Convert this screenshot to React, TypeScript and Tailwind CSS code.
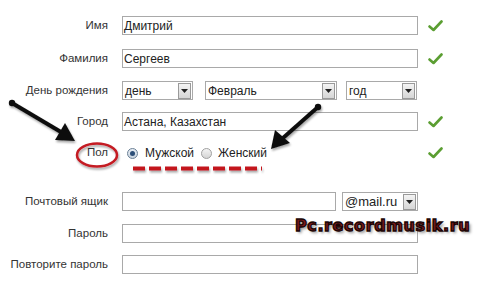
const Check = () => (
  <svg width="15" height="12" viewBox="0 0 15 12" className="ml-[10px] shrink-0">
    <path d="M1.5 6.5 L5.5 10 L13.5 1.5" fill="none" stroke="#5b9e32" strokeWidth="2.6" strokeLinecap="round" strokeLinejoin="round" />
  </svg>
);

const Arrow = () => (
  <div className="flex h-[16px] w-[13px] shrink-0 items-center justify-center border border-[#9a9a9a] bg-gradient-to-b from-[#f4f4f4] to-[#d6d6d6]">
    <svg width="7" height="4" viewBox="0 0 7 4">
      <path d="M0 0 H7 L3.5 4 Z" fill="#222" />
    </svg>
  </div>
);

function Select({ value, w, big }: { value: string; w: string; big?: boolean }) {
  return (
    <div className={`flex h-[19px] items-center justify-between border border-[#a9a9a9] bg-white pl-[2px] pr-[1px] ${w}`}>
      <span className={big ? "text-[13px] text-[#222]" : "text-[12px] text-[#222]"}>{value}</span>
      <Arrow />
    </div>
  );
}

function Input({ value = "", w = "w-[296px]" }: { value?: string; w?: string }) {
  return (
    <div className={`flex h-[19px] items-center border border-[#a9a9a9] bg-white pl-[1px] text-[12px] text-[#222] ${w}`}>
      {value}
    </div>
  );
}

function Row({ label, children, check, className = "" }: { label: string; children: React.ReactNode; check?: boolean; className?: string }) {
  return (
    <div className={`flex items-center ${className}`}>
      <div className="w-[108px] shrink-0 text-right text-[11.5px] text-[#333]">{label}</div>
      <div className="ml-[14px] flex w-[296px] items-center">{children}</div>
      {check && <Check />}
    </div>
  );
}

export default function App() {
  return (
    <div className="relative h-[285px] w-[480px] overflow-hidden bg-white font-['Liberation_Sans',Arial,sans-serif]">
      <div className="flex flex-col pt-[16px]">
        <Row label="Имя" check>
          <Input value="Дмитрий" />
        </Row>
        <Row label="Фамилия" check className="mt-[14px]">
          <Input value="Сергеев" />
        </Row>
        <Row label="День рождения" className="mt-[13px]">
          <Select value="день" w="w-[71px]" />
          <div className="ml-[12px]">
            <Select value="Февраль" w="w-[132px]" />
          </div>
          <div className="ml-[9px]">
            <Select value="год" w="w-[71px]" />
          </div>
        </Row>
        <Row label="Город" check className="mt-[12px]">
          <Input value="Астана, Казахстан" />
        </Row>
        <Row label="Пол" check className="mt-[13px] h-[18px]">
          <div className="ml-[5px] flex h-[11px] w-[11px] items-center justify-center rounded-full border border-[#6a7f95] bg-gradient-to-b from-[#e8eef5] to-[#c8d3de]">
            <div className="h-[5px] w-[5px] rounded-full bg-[#2d4f78]" />
          </div>
          <span className="ml-[7px] text-[12px] text-[#222]">Мужской</span>
          <div className="ml-[7px] h-[11px] w-[11px] rounded-full border border-[#a0a0a0] bg-gradient-to-b from-[#f4f4f4] to-[#d4d4d4]" />
          <span className="ml-[6px] text-[12px] text-[#222]">Женский</span>
        </Row>
        <Row label="Почтовый ящик" className="mt-[30px]">
          <Input w="w-[215px]" />
          <div className="ml-[6px]">
            <Select value="@mail.ru" w="w-[76px]" big />
          </div>
        </Row>
        <Row label="Пароль" className="mt-[13px]">
          <Input />
        </Row>
        <Row label="Повторите пароль" className="mt-[12px]">
          <Input />
        </Row>
      </div>

      {/* annotations */}
      <svg className="pointer-events-none absolute left-0 top-0" width="480" height="285">
        <defs>
          <filter id="sh" x="-20%" y="-20%" width="140%" height="140%">
            <feGaussianBlur in="SourceAlpha" stdDeviation="1.2" />
            <feOffset dx="1" dy="2" />
            <feComponentTransfer>
              <feFuncA type="linear" slope="0.35" />
            </feComponentTransfer>
            <feMerge>
              <feMergeNode />
              <feMergeNode in="SourceGraphic" />
            </feMerge>
          </filter>
        </defs>
        <g filter="url(#sh)">
          <circle cx="12" cy="103" r="3.2" fill="#111" />
          <line x1="12" y1="103" x2="61" y2="132" stroke="#111" strokeWidth="4" />
          <path d="M75 141 L55 140 L65 123 Z" fill="#111" />
          <circle cx="318" cy="107" r="3.2" fill="#111" />
          <line x1="318" y1="107" x2="283" y2="138" stroke="#111" strokeWidth="4" />
          <path d="M271 149 L275 130 L290 143 Z" fill="#111" />
          <ellipse cx="97" cy="155" rx="20" ry="11.5" fill="none" stroke="#c41a24" strokeWidth="2.5" />
          <line x1="133" y1="168.5" x2="262" y2="168.5" stroke="#c3161e" strokeWidth="4" strokeDasharray="12 4" />
        </g>
      </svg>

      <div className="absolute left-[295px] top-[214px] text-[16px] font-bold tracking-[0.6px] text-[#7e1a1a] font-['DejaVu_Sans',sans-serif] [-webkit-text-stroke:1.3px_#1a0505] [text-shadow:2px_2px_3px_rgba(0,0,0,0.45)]">
        Pc.recordmusik.ru
      </div>
    </div>
  );
}
